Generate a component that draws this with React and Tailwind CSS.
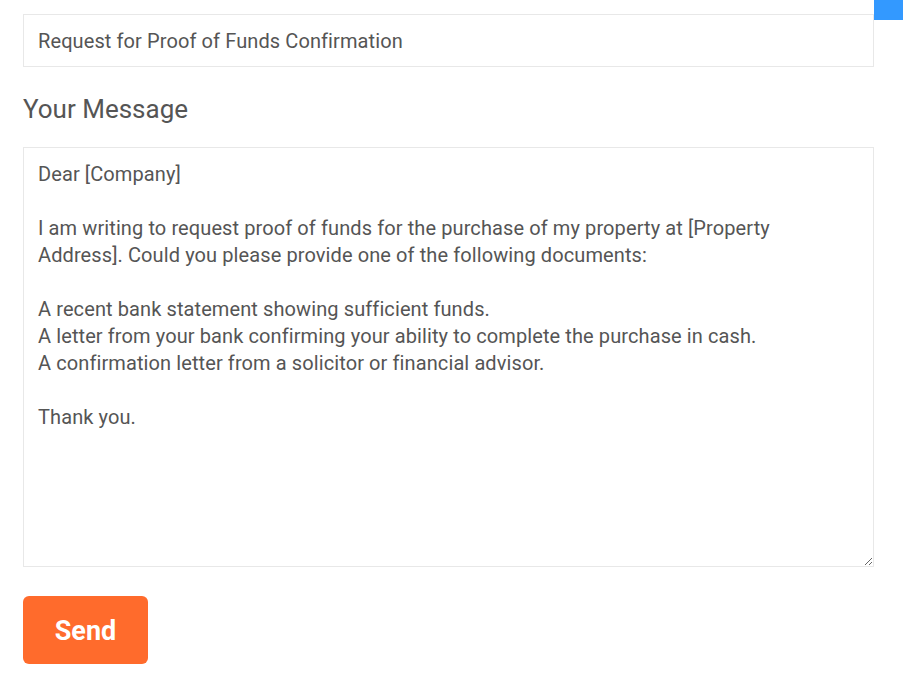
export default function App() {
  const message = `Dear [Company]

I am writing to request proof of funds for the purchase of my property at [Property Address]. Could you please provide one of the following documents:

A recent bank statement showing sufficient funds.
A letter from your bank confirming your ability to complete the purchase in cash.
A confirmation letter from a solicitor or financial advisor.

Thank you.`

  return (
    <div className="relative min-h-screen bg-white font-['Roboto',sans-serif] text-[#555]">
      <div className="absolute right-0 top-0 h-5 w-[29px] bg-[#3399ff]" />

      <div className="w-[874px] pl-[23px] pt-[14px]">
        <input
          type="text"
          defaultValue="Request for Proof of Funds Confirmation"
          className="block h-[53px] w-full border border-[#e8e8e8] bg-white px-[14px] text-[20px] tracking-[0.1px] text-[#555] outline-none"
        />

        <h2 className="mt-[26px] text-[26px] leading-[32px] font-normal text-[#555]">Your Message</h2>

        <textarea
          defaultValue={message}
          className="mt-[22px] block h-[420px] w-full resize-y border border-[#e8e8e8] bg-white pl-[14px] pr-[40px] pt-[13px] pb-[12px] text-[20px] leading-[27px] tracking-[0.1px] text-[#555] outline-none"
        />

        <button className="mt-[29px] h-[68px] w-[125px] rounded-[6px] bg-[#ff6b2c] pt-[3px] text-[27px] font-bold text-white">
          Send
        </button>
      </div>
    </div>
  )
}
